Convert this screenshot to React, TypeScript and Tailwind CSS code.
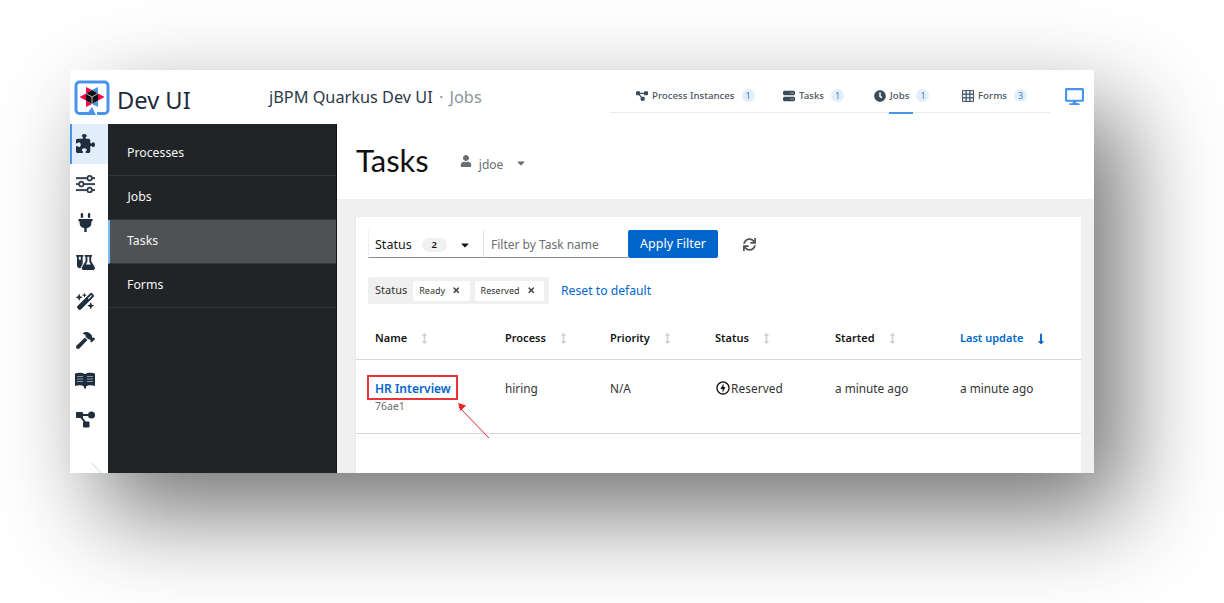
import React from "react";
import { FaPlug, FaHammer, FaClock, FaDesktop, FaUser, FaSync, FaTimes, FaCaretDown, FaArrowsAltV, FaLongArrowAltDown } from "react-icons/fa";
import { FaFlaskVial, FaWandMagicSparkles, FaPuzzlePiece, FaServer, FaDiagramProject } from "react-icons/fa6";
import { MdOutlineOfflineBolt } from "react-icons/md";
import { BsSliders, BsGrid3X3 } from "react-icons/bs";

const ui = "font-['Noto_Sans','Open_Sans',sans-serif]";

function Logo() {
  return (
    <svg width="36" height="36" viewBox="0 0 36 36" className="shrink-0">
      <path d="M23 33.500h7.500a3.500 3.500 0 0 0 3.500-3.500V5.500A3.500 3.500 0 0 0 30.500 2h-25A3.500 3.500 0 0 0 2 5.500V30a3.500 3.500 0 0 0 3.500 3.500H14" fill="none" stroke="#4695EB" strokeWidth="3" strokeLinejoin="round" />
      <path d="M12 35l6-8 4 8z" fill="#4695EB" />
      <path d="M12 7l6 3-6 3.500z" fill="#FF004A" />
      <path d="M24 7l-6 3 6 3.500z" fill="#4695EB" />
      <path d="M30.500 17L24 13.500v7z" fill="#FF004A" />
      <path d="M24 27l-6-3 6-3.500z" fill="#4695EB" />
      <path d="M12 27l6-3-6-3.500z" fill="#FF004A" />
      <path d="M5.500 17L12 13.500v7z" fill="#FF004A" />
      <path d="M18 10l6 3.500v7L18 24l-6-3.500v-7z" fill="#111" />
      <path d="M18 17v7M18 17l6-3.500M18 17l-6-3.500" stroke="#fff" strokeWidth="0.700" fill="none" />
    </svg>
  );
}

function BookIcon() {
  return (
    <svg width="20" height="17" viewBox="0 0 20 17">
      <path d="M0 1.500C3 .5 7 .5 10 2c3-1.500 7-1.500 10-.5V14c-3-1-7-1-9 .5V16.500H9V14.500C7 13 3 13 0 14z" fill="#1f2d3d" />
      <path d="M2 4.500h6M2 7h6M2 9.500h6M12 4.500h6M12 7h6M12 9.500h6" stroke="#8b97a5" strokeWidth="1" fill="none" />
    </svg>
  );
}

function DiagramIcon() {
  return (
    <svg width="19" height="17" viewBox="0 0 19 17">
      <rect x="0" y="1" width="7" height="6" rx="1" fill="#1f2d3d" />
      <circle cx="15.500" cy="4" r="3.500" fill="#1f2d3d" />
      <rect x="7" y="10.500" width="6.500" height="6" rx="1" fill="#1f2d3d" />
      <path d="M6 4h7M5 6l4 5" stroke="#1f2d3d" strokeWidth="2" fill="none" />
    </svg>
  );
}

function Tab({ icon, label, count, active, cls }: { icon: React.ReactNode; label: string; count: number; active?: boolean; cls: string }) {
  return (
    <div className={`relative flex items-start h-[43px] pt-[19px] ${cls}`}>
      <span className="text-[#3c4a5a] text-[12px] h-[14px] mr-[4px] flex items-center">{icon}</span>
      <span className="text-[9.700px] leading-[14px] text-[#4a5561] font-medium whitespace-nowrap">{label}</span>
      <span className="ml-[7px] w-[13px] h-[13px] rounded-full bg-[#e3eefc] text-[#4a7cc0] text-[9px] flex items-center justify-center">{count}</span>
      {active && <span className="absolute bottom-[-1px] left-[15px] w-[24px] h-[2px] bg-[#4695eb]" />}
    </div>
  );
}

function NavItem({ label, active }: { label: string; active?: boolean }) {
  return (
    <div className={`h-[44px] flex items-center border-b border-[#33373a] text-[12.300px] text-[#f5f5f5] ${active ? "bg-[#4f5255] border-l-[2px] border-l-[#73bcf7] pl-[17px]" : "pl-[19px]"}`}>
      {label}
    </div>
  );
}

function Rail({ children, active }: { children: React.ReactNode; active?: boolean }) {
  return (
    <div className={`flex items-center justify-center text-[#1f2d3d] text-[19px] ${active ? "h-[40px] bg-[#e3eefc] border-l-[2px] border-l-[#4695eb] pr-[10px]" : "h-[39.300px] pr-[8px]"}`}>
      {children}
    </div>
  );
}

function Th({ label, sorted }: { label: string; sorted?: boolean }) {
  return (
    <div className={`flex items-center text-[11px] font-semibold ${sorted ? "text-[#0066cc]" : "text-[#151515]"}`}>
      <span>{label}</span>
      {sorted ? (
        <FaLongArrowAltDown className="ml-[12px] text-[12px] text-[#0066cc]" />
      ) : (
        <FaArrowsAltV className="ml-[12px] text-[11px] text-[#d2d2d2]" />
      )}
    </div>
  );
}

function Chip({ label }: { label: string }) {
  return (
    <div className="h-[20px] bg-white rounded-[2px] flex items-center pl-[6px] pr-[9px] text-[9px] text-[#333]">
      {label}
      <FaTimes className="ml-[7px] text-[8.500px] text-[#444]" />
    </div>
  );
}

export default function App() {
  return (
    <div className={`w-[1224px] h-[603px] bg-white overflow-hidden pt-[70px] pl-[70px] ${ui}`}>
      <div className="w-[1024px] h-[403px] bg-white flex flex-col shadow-[30px_40px_90px_rgba(0,0,0,0.55)] relative">
        <header className="h-[54px] flex shrink-0">
          <div className="w-[199px] flex items-center pl-[4px] pt-[1px]">
            <Logo />
            <span className="ml-[7px] mt-[7px] text-[23.700px] text-[#1f2d3d] leading-none">Dev UI</span>
          </div>
          <div className="pt-[15px] text-[16.300px] leading-[24px] text-[#2c3a4a] whitespace-nowrap">
            jBPM Quarkus Dev UI <span className="ml-[2px] text-[#8b95a0]">· <span className="ml-[2px]">Jobs</span></span>
          </div>
          <div className="ml-auto flex items-start">
            <nav className="flex h-[43px] w-[440px] border-b border-[#e8eaed] pl-[26px]">
              <Tab cls="w-[147px]" icon={<FaDiagramProject />} label="Process Instances" count={1} />
              <Tab cls="w-[91px]" icon={<FaServer />} label="Tasks" count={1} />
              <Tab cls="w-[88px]" active icon={<FaClock />} label="Jobs" count={1} />
              <Tab cls="w-[80px]" icon={<BsGrid3X3 strokeWidth={0.6} />} label="Forms" count={3} />
            </nav>
            <FaDesktop className="text-[#4695eb] text-[19px] ml-[15px] mr-[10px] mt-[17px]" />
          </div>
        </header>

        <div className="flex flex-1 min-h-0">
          <aside className="w-[38px] shrink-0 flex flex-col overflow-hidden">
            <Rail active><FaPuzzlePiece /></Rail>
            <Rail><BsSliders strokeWidth={0.5} /></Rail>
            <Rail><FaPlug /></Rail>
            <Rail><FaFlaskVial /></Rail>
            <Rail><FaWandMagicSparkles /></Rail>
            <Rail><FaHammer /></Rail>
            <Rail><BookIcon /></Rail>
            <Rail><DiagramIcon /></Rail>
            <svg width="38" height="10" viewBox="0 0 38 10" className="mt-[24px] shrink-0">
              <path d="M22 0l9 10" stroke="#e8ebf0" strokeWidth="2" fill="none" />
            </svg>
          </aside>

          <aside className="w-[229px] shrink-0 bg-[#212427] border-r border-[#111]">
            <div className="h-[51.500px] flex items-center pl-[19px] pt-[8px] border-b border-[#33373a] text-[12.300px] text-[#f5f5f5]">Processes</div>
            <div className="h-[44px] flex items-center pl-[19.500px] border-b border-[#33373a] text-[12.300px] text-[#f5f5f5]">Jobs</div>
            <NavItem label="Tasks" active />
            <NavItem label="Forms" />
          </aside>

          <main className="flex-1 min-w-0 bg-[#f0f0f0] overflow-hidden">
            <div className="h-[75px] bg-white flex items-center pl-[19px]">
              <h1 className="text-[31px] leading-none text-[#111] font-['Lato',sans-serif] pb-[3px]">Tasks</h1>
              <FaUser className="ml-[31px] text-[12px] text-[#6a6e73] mb-[1px]" />
              <span className="ml-[7px] pt-[6px] text-[12px] text-[#6a6e73]">jdoe</span>
              <FaCaretDown className="ml-[12px] mt-[3px] text-[12px] text-[#6a6e73]" />
            </div>

            <section className="mt-[18px] ml-[18px] w-[726px] h-[300px] bg-white border-l border-[#e8e8e8] relative">
              <div className="flex items-center pl-[12px] pt-[13px] h-[41px]">
                <div className="w-[116px] h-[28px] pt-[3px] border-b border-[#8a8d90] border-r border-r-[#e0e0e0] border-l border-l-[#f0f0f0] flex items-center pl-[6px] text-[12.500px] text-[#151515]">
                  Status
                  <span className="ml-[10px] w-[25px] h-[14px] rounded-full bg-[#f0f0f0] flex items-center justify-center text-[9.500px] font-semibold">2</span>
                  <FaCaretDown className="ml-[12px] text-[12px]" />
                </div>
                <div className="w-[144px] h-[28px] pt-[2px] border-b border-[#8a8d90] flex items-center pl-[7px] text-[12px] text-[#6a6e73]">Filter by Task name</div>
                <button className="w-[90px] h-[28px] pt-[1px] bg-[#0066cc] rounded-[2px] text-white text-[12.500px]">Apply Filter</button>
                <FaSync className="ml-[25px] text-[13px] text-[#555]" />
              </div>

              <div className="mt-[19px] ml-[12px] flex items-center">
                <div className="h-[27px] w-[181px] bg-[#f0f0f0] rounded-[2px] flex items-center pl-[7px] text-[11px] text-[#333]">
                  <span className="mr-[6px]">Status</span>
                  <Chip label="Ready" />
                  <span className="w-[5px]" />
                  <Chip label="Reserved" />
                </div>
                <span className="ml-[12px] pt-[1px] text-[12.200px] text-[#0066cc]">Reset to default</span>
              </div>

              <div className="grid grid-cols-[130px_105px_105px_120px_125px_1fr] pl-[19px] h-[42px] mt-[14px] items-center border-b border-[#d8d8d8]">
                <Th label="Name" />
                <Th label="Process" />
                <Th label="Priority" />
                <Th label="Status" />
                <Th label="Started" />
                <Th label="Last update" sorted />
              </div>

              <div className="grid grid-cols-[130px_105px_105px_120px_125px_1fr] pl-[19px] h-[74px] border-b border-[#d8d8d8] text-[11.800px] text-[#333]">
                <div className="pt-[20px] relative">
                  <div className="text-[12px] leading-[17px] font-semibold text-[#0066cc]">HR Interview</div>
                  <div className="text-[10.500px] leading-[13px] pt-[3px] text-[#6a6e73]">76ae1</div>
                  <div className="absolute left-[-8px] top-[15px] w-[91px] h-[25px] border-2 border-[#e8353b]" />
                  <svg className="absolute left-[75px] top-[40px] overflow-visible" width="40" height="40" viewBox="0 0 40 40">
                    <path d="M39 38L9 7" stroke="#e8232a" strokeWidth="1" fill="none" />
                    <path d="M8 3l8 2.500-5.500 5.500z" fill="#e8232a" />
                  </svg>
                </div>
                <div className="pt-[20px] leading-[17px]">hiring</div>
                <div className="pt-[20px] leading-[17px]">N/A</div>
                <div className="pt-[20px] leading-[17px] flex items-start">
                  <MdOutlineOfflineBolt className="text-[16px] text-[#151515]" />
                  <span className="tracking-[0.1px]">Reserved</span>
                </div>
                <div className="pt-[20px] leading-[17px]">a minute ago</div>
                <div className="pt-[20px] leading-[17px]">a minute ago</div>
              </div>
            </section>
          </main>
        </div>
      </div>
    </div>
  );
}
